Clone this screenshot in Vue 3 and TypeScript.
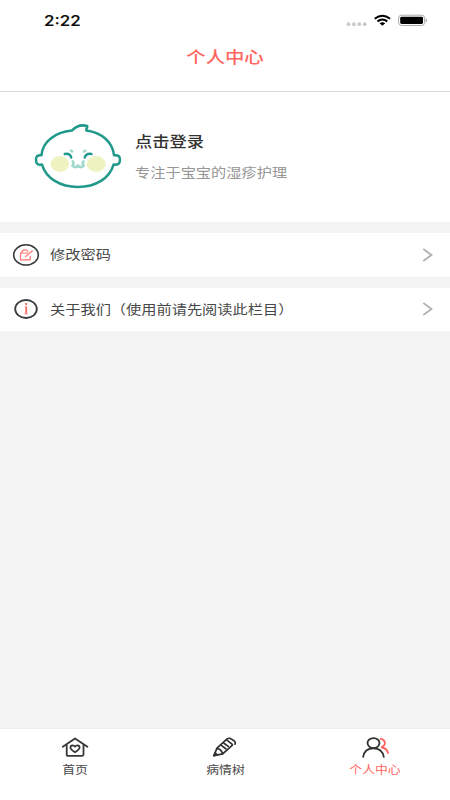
<script setup lang="ts">
import { ref } from 'vue'

interface MenuRow {
  id: 'password' | 'about'
  label: string
}

interface Tab {
  id: 'home' | 'tree' | 'me'
  label: string
}

const rows: MenuRow[] = [
  { id: 'password', label: '修改密码' },
  { id: 'about', label: '关于我们（使用前请先阅读此栏目）' },
]

const tabs: Tab[] = [
  { id: 'home', label: '首页' },
  { id: 'tree', label: '病情树' },
  { id: 'me', label: '个人中心' },
]

const activeTab = ref<Tab['id']>('me')
</script>

<template>
  <div class="screen">
    <div class="status">
      <span class="time wide">2:22</span>
      <svg class="status-icons" width="82" height="14" viewBox="0 0 82 14">
        <g fill="#c9c9cb">
          <circle cx="3.5" cy="10.2" r="1.9" />
          <circle cx="8.9" cy="10.2" r="1.9" />
          <circle cx="14.3" cy="10.2" r="1.9" />
          <circle cx="19.8" cy="10.2" r="1.9" />
        </g>
        <g fill="none" stroke="#000" stroke-width="2">
          <path d="M29.7 4.7Q37.4-1.3 45.1 4.7" />
          <path d="M32.5 7.4Q37.4 3.6 42.3 7.4" />
        </g>
        <path d="M34.6 9.2Q37.4 7.3 40.2 9.2L37.4 11.7Z" fill="#000" />
        <rect x="53.6" y="1.2" width="26" height="10.3" rx="3" fill="none" stroke="#a9a9a9" />
        <rect x="55.2" y="2.8" width="22.8" height="7.1" rx="1.4" fill="#000" />
        <path d="M80.7 4.5q1.3.4 1.3 1.9t-1.3 1.9Z" fill="#a0a0a0" />
      </svg>
    </div>

    <header class="header"><h1 class="title wide">个人中心</h1></header>

    <section class="profile">
      <svg class="avatar" width="90" height="66" viewBox="0 0 90 66">
        <g fill="none" stroke="#20998a" stroke-width="2.5" stroke-linejoin="round" stroke-linecap="round">
          <path d="M38.8 7.6C22 9.4 9.5 18.4 8.5 32.2C4.5 31.9 3 32.9 3 36.8C3 40.9 4.8 42.2 9 41.6C13 55.2 27 63.9 45 63.9C63 63.9 76.5 55.2 80.6 41.6C85 42 87 40.9 87 36.8C87 32.8 85 31.9 81 32.2C79.5 18.9 69 9.9 53.5 7.6C52.5 5.9 54.6 5.1 54.2 3C48.5 1.4 42.5 3.7 38.8 7.6Z" />
        </g>
        <ellipse cx="26.9" cy="41" rx="9.3" ry="7.9" fill="#eff3c1" />
        <ellipse cx="63.2" cy="41" rx="9.5" ry="7.9" fill="#eff3c1" />
        <g fill="none" stroke="#20998a" stroke-width="2.4" stroke-linecap="round">
          <path d="M31.7 31Q37 30 38.2 34.5" />
          <path d="M58.5 31Q53.2 30 51.7 34.5" />
        </g>
        <g fill="none" stroke="#a4d9ce" stroke-width="2.6" stroke-linecap="round">
          <path d="M38 27.7l1.2.8M51 28.5l1.2-.8" />
          <path d="M39.7 38.4q1.6 1.9 0 4M50.5 38.4q-1.6 1.9 0 4" />
          <path d="M39.5 43Q42.8 45.4 45 42.6Q47.3 45.4 50.6 43" />
        </g>
      </svg>
      <div class="profile-text">
        <div class="login wide">点击登录</div>
        <div class="slogan wide">专注于宝宝的湿疹护理</div>
      </div>
    </section>

    <main class="menu">
      <div v-for="row in rows" :key="row.id" class="row">
        <svg class="row-icon" width="28" height="24" viewBox="0 0 28 24">
          <template v-if="row.id === 'password'">
            <ellipse cx="14" cy="11.9" rx="12.3" ry="10.1" fill="none" stroke="#373b3f" stroke-width="1.6" />
            <g fill="none" stroke="#ff746f" stroke-width="1.2" stroke-linejoin="round" stroke-linecap="round">
              <path d="M15.8 10H8.5v6.8h9.8v-3.6" />
              <path d="M9.8 9.8V9.2Q10 6.8 13 6.8Q15.4 6.8 15.7 8.4" />
              <path d="M13.2 13.9l7.2-6.1" />
            </g>
          </template>
          <template v-else>
            <ellipse cx="14" cy="12" rx="10.8" ry="9" fill="none" stroke="#373b3f" stroke-width="1.8" />
            <path d="M14.2 9.6v7.5" stroke="#ff6560" stroke-width="1.8" />
            <path d="M12.5 9.9h1.8M12.2 17h4" stroke="#ff9c98" stroke-width=".8" />
            <ellipse cx="14.1" cy="7" rx="1.3" ry="1.1" fill="#ff6560" />
          </template>
        </svg>
        <span class="row-label wide">{{ row.label }}</span>
        <svg class="chevron" width="11" height="14" viewBox="0 0 11 14">
          <path d="M1.3 1L9.5 7L1.3 13" fill="none" stroke="#b2b2b2" stroke-width="1.8" />
        </svg>
      </div>
    </main>

    <nav class="tabs">
      <button v-for="tab in tabs" :key="tab.id" class="tab" :class="{ active: tab.id === activeTab }" @click="activeTab = tab.id">
        <svg class="tab-icon" width="30" height="22" viewBox="0 0 30 22">
          <g v-if="tab.id === 'home'" fill="none" stroke="#383838" stroke-width="1.8" stroke-linejoin="round" stroke-linecap="round">
            <path d="M2.8 9.8L15 1.4l12.4 8.4" />
            <path d="M6.7 8.2v9.2q0 1.4 1.7 1.4h13.4q1.7 0 1.7-1.4V8.2" />
            <path d="M15 15.2C11.8 13.4 10.4 12 10.4 10.3C10.4 8.2 13.6 7.8 15 9.6C16.4 7.8 19.6 8.2 19.6 10.3C19.6 12 18.2 13.4 15 15.2Z" />
          </g>
          <g v-else-if="tab.id === 'tree'" fill="none" stroke="#303030" stroke-width="1.7" stroke-linejoin="round" stroke-linecap="round">
            <path d="M3.9 18.6L7 11.2L16.8 2.2Q18.6.7 20.6 1.6L23.6 3.5Q26 5 25 7.2" />
            <path d="M3.9 18.6L12.7 16.9L22.4 8.2" />
            <path d="M7.2 11.6q3.8.3 5.4 5" />
            <path d="M16.7 2.9l5.6 4.5M14 6.2l4.2 3.2M11.6 8.6l4.2 3.2" />
            <path d="M4.2 18.4l1-2.5 1.8 2z" fill="#303030" />
          </g>
          <g v-else fill="none" stroke-width="1.8" stroke-linecap="round">
            <path d="M20.6 1.8C25.6 2.6 26.8 8 21.6 10.1M22 10.5Q27.4 11.6 27.9 16.2" stroke="#ff6560" />
            <ellipse cx="13.5" cy="6.1" rx="6" ry="5" stroke="#303030" />
            <path d="M3.2 19.8C4 14.2 7.8 11.3 13.4 11.3S22.8 14.2 23.8 19.8" stroke="#303030" />
          </g>
        </svg>
        <span class="tab-label wide">{{ tab.label }}</span>
      </button>
    </nav>
  </div>
</template>

<style>
body {
  background: #f4f4f4;
}
</style>

<style scoped>
.screen {
  display: flex;
  flex-direction: column;
  width: 450px;
  height: 800px;
  overflow: hidden;
  background: #f4f4f4;
  color: #484848;
  font-family: "Noto Sans CJK SC", sans-serif;
}
.wide {
  transform: scaleX(1.17);
  transform-origin: left center;
  white-space: nowrap;
}
.status {
  display: flex;
  flex: none;
  justify-content: space-between;
  height: 41px;
  padding: 14px 23px 0 44px;
  box-sizing: border-box;
  background: #fff;
}
.time {
  color: #111;
  font: 600 14px/14px Inter, sans-serif;
  transform: scaleX(1.2);
}
.status-icons {
  flex: none;
}
.header {
  display: flex;
  flex: none;
  justify-content: center;
  height: 51px;
  padding-top: 3px;
  box-sizing: border-box;
  background: #fff;
  border-bottom: 1px solid #d9d9d9;
}
.title {
  margin: 0;
  color: #ff6560;
  font-size: 16px;
  font-weight: 500;
  line-height: 24px;
  transform: scaleX(1.21);
  transform-origin: center;
}
.profile {
  display: flex;
  flex: none;
  height: 130px;
  padding: 31px 33px 0;
  box-sizing: border-box;
  background: #fff;
}
.avatar {
  flex: none;
}
.profile-text {
  padding: 6px 0 0 12px;
}
.login {
  color: #333;
  font-size: 15px;
  font-weight: 500;
  line-height: 24px;
  transform: scaleX(1.15);
}
.slogan {
  margin-top: 7px;
  color: #969696;
  font-size: 13px;
  line-height: 24px;
}
.menu {
  display: flex;
  flex: 1;
  flex-direction: column;
  gap: 11px;
  padding-top: 11px;
}
.row {
  display: flex;
  flex: none;
  align-items: center;
  height: 43.5px;
  padding: 0 17px 0 12px;
  background: #fff;
}
.row-label {
  margin-left: 10px;
  padding-bottom: 1.5px;
  font-size: 13px;
  line-height: 24px;
}
.chevron {
  margin-left: auto;
}
.tabs {
  display: flex;
  flex: none;
  height: 72px;
  background: #fff;
  border-top: 1px solid #ececec;
  box-sizing: border-box;
}
.tab {
  display: flex;
  flex: 1;
  flex-direction: column;
  align-items: center;
  padding: 8px 0 0;
  border: 0;
  background: none;
  color: #484848;
  font: 400 11px/20px "Noto Sans CJK SC", sans-serif;
}
.tab-label {
  transform-origin: center;
}
.tab.active {
  color: #ff6560;
}
</style>
